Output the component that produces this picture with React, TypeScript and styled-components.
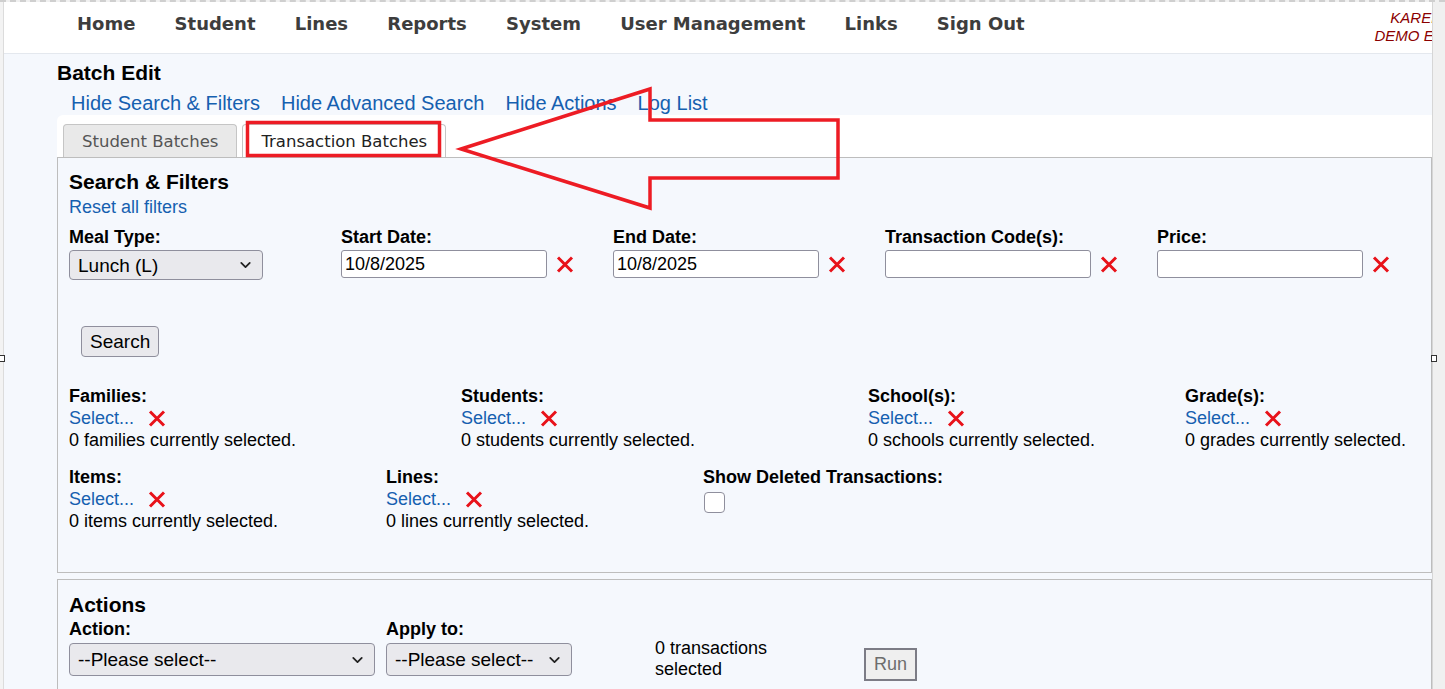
import React from "react";
import styled, { createGlobalStyle } from "styled-components";
import { ChevronDown } from "lucide-react";

const GlobalStyle = createGlobalStyle`
  html, body {
    margin: 0;
    padding: 0;
    background: #f0f0f0;
    overflow: hidden;
  }
  body {
    font-family: "Liberation Sans", Arial, sans-serif;
    color: #000;
  }
`;

const Frame = styled.div`
  display: flex;
  height: 689px;
  border-top: 2px dashed #cfcfcf;
  box-sizing: border-box;
  position: relative;
`;

const LeftEdge = styled.div`
  width: 3px;
  background: #f3f3f3;
  border-right: 1px solid #dcdcdc;
`;

const RightEdge = styled.div`
  width: 12px;
  background: #f0f0f0;
  border-left: 1px solid #d6d6d6;
`;

const Handle = styled.div<{ $left: number }>`
  position: absolute;
  left: ${(p) => p.$left}px;
  top: 353px;
  width: 4px;
  height: 5px;
  border: 1px solid #333;
  background: #fff;
`;

const Viewport = styled.div`
  width: 1428px;
  height: 687px;
  overflow: hidden;
  background: #f5f8fd;
  position: relative;
`;

const NavBar = styled.div`
  height: 51px;
  background: #fff;
  border-bottom: 1px solid #e4e8ee;
  display: flex;
  align-items: center;
  padding-left: 53px;
`;

const NavItem = styled.a`
  padding: 0 19.6px;
  font-family: "DejaVu Sans", Verdana, sans-serif;
  font-weight: bold;
  font-size: 18px;
  color: #3d3d3d;
  text-decoration: none;
  white-space: nowrap;
  position: relative;
  top: -4px;
  &:first-child {
    padding-left: 20px;
  }
`;

const UserBlock = styled.div`
  margin-left: auto;
  margin-right: -10px;
  text-align: right;
  font-style: italic;
  font-size: 15px;
  line-height: 18px;
  color: #8b0000;
  white-space: nowrap;
  position: relative;
  top: -1px;
`;

const Content = styled.div`
  padding-left: 53px;
`;

const PageTitle = styled.div`
  font-weight: bold;
  font-size: 21px;
  line-height: 24px;
  margin-top: 7px;
`;

const LinkRow = styled.div`
  display: flex;
  gap: 21px;
  padding-left: 14px;
  margin-top: 7px;
  line-height: 23px;
`;

const TopLink = styled.a`
  color: #1560b0;
  font-size: 20px;
  text-decoration: none;
  white-space: nowrap;
`;

const TabBand = styled.div`
  background: #fff;
  border-top-left-radius: 6px;
  padding: 9px 0 0 6px;
  display: flex;
  gap: 5px;
  height: 33px;
`;

const Tab = styled.div<{ $active?: boolean }>`
  height: 32px;
  padding: 0 18px;
  display: flex;
  align-items: center;
  font-family: "DejaVu Sans", Verdana, sans-serif;
  font-size: 16.5px;
  color: ${(p) => (p.$active ? "#222" : "#555")};
  background: ${(p) => (p.$active ? "#fff" : "#e9e9e9")};
  border: 1px solid #c5c5c5;
  border-bottom: none;
  border-radius: 4px 4px 0 0;
  white-space: nowrap;
`;

const Panel = styled.div<{ $height?: number }>`
  border: 1px solid #bdbdbd;
  background: #f5f8fd;
  padding: 12px 11px 0 11px;
  box-sizing: border-box;
  height: ${(p) => (p.$height ? `${p.$height}px` : "auto")};
`;

const PanelTitle = styled.div`
  font-weight: bold;
  font-size: 21px;
  line-height: 24px;
`;

const SmallLink = styled.a`
  color: #1560b0;
  font-size: 18px;
  line-height: 22px;
  text-decoration: none;
`;

const ResetLink = styled(SmallLink)`
  display: block;
  margin-top: 2px;
`;

const FieldGrid = styled.div<{ $cols: string }>`
  display: grid;
  grid-template-columns: ${(p) => p.$cols};
`;

const Label = styled.div`
  font-weight: bold;
  font-size: 18px;
  line-height: 22px;
  white-space: nowrap;
`;

const InputRow = styled.div`
  display: flex;
  align-items: center;
  gap: 9px;
  margin-top: 2px;
`;

const TextInput = styled.input`
  width: 206px;
  height: 28px;
  box-sizing: border-box;
  border: 1px solid #8f8f9d;
  border-radius: 3px;
  background: #fff;
  font-family: "Liberation Sans", Arial, sans-serif;
  font-size: 18px;
  padding: 0 3px;
  color: #000;
`;

const SelectWrap = styled.div<{ $width: number; $height: number }>`
  position: relative;
  width: ${(p) => p.$width}px;
  height: ${(p) => p.$height}px;
`;

const Select = styled.select`
  appearance: none;
  width: 100%;
  height: 100%;
  box-sizing: border-box;
  border: 1px solid #8f8f9d;
  border-radius: 4px;
  background: #e9e9ed;
  font-family: "Liberation Sans", Arial, sans-serif;
  font-size: 19px;
  color: #000;
  padding: 0 8px;
`;

const Chevron = styled(ChevronDown)`
  position: absolute;
  right: 9px;
  top: 50%;
  transform: translateY(-50%);
  pointer-events: none;
`;

const SearchButton = styled.button`
  height: 31px;
  padding: 0 8px;
  margin: 46px 0 0 12px;
  background: #e9e9ed;
  border: 1px solid #8f8f9d;
  border-radius: 4px;
  font-family: "Liberation Sans", Arial, sans-serif;
  font-size: 19px;
  color: #000;
`;

const RunButton = styled.button`
  width: 53px;
  height: 33px;
  margin-bottom: -5px;
  background: #efefef;
  border: 2px solid #7c7c86;
  font-family: "Liberation Sans", Arial, sans-serif;
  font-size: 18px;
  color: #6d6d6d;
  padding: 0;
`;

const Cell = styled.div`
  font-size: 18px;
  line-height: 22px;
`;

const SelectLine = styled.div`
  display: flex;
  align-items: center;
  gap: 14px;
`;

const Checkbox = styled.div`
  width: 19px;
  height: 19px;
  margin: 4px 0 0 1px;
  border: 1px solid #8f8f9d;
  border-radius: 4px;
  background: #fff;
`;

const ActionsPanel = styled(Panel)`
  margin-top: 6px;
  padding-top: 13px;
  padding-bottom: 20px;
`;

const ActionsRow = styled.div`
  display: grid;
  grid-template-columns: 317px 269px 209px auto;
  align-items: end;
  margin-top: 1px;
`;

const ActionSelect = styled(SelectWrap)`
  margin-top: 3px;
`;

const CountText = styled.div`
  font-size: 18px;
  line-height: 21px;
  width: 130px;
  margin-bottom: -4px;
`;

const Overlay = styled.svg`
  position: absolute;
  left: 0;
  top: 0;
  pointer-events: none;
`;

const RedX = () => (
  <svg width="18" height="17" viewBox="0 0 18 17">
    <path d="M2 1.5 L16 15.5 M16 1.5 L2 15.5" stroke="#e8121a" strokeWidth="3" />
  </svg>
);

const navItems = ["Home", "Student", "Lines", "Reports", "System", "User Management", "Links", "Sign Out"];

const filterFields = [
  { label: "Meal Type:", kind: "select", value: "Lunch (L)" },
  { label: "Start Date:", kind: "text", value: "10/8/2025" },
  { label: "End Date:", kind: "text", value: "10/8/2025" },
  { label: "Transaction Code(s):", kind: "text", value: "" },
  { label: "Price:", kind: "text", value: "" },
];

const pickers1 = [
  { label: "Families:", count: "0 families currently selected." },
  { label: "Students:", count: "0 students currently selected." },
  { label: "School(s):", count: "0 schools currently selected." },
  { label: "Grade(s):", count: "0 grades currently selected." },
];

const pickers2 = [
  { label: "Items:", count: "0 items currently selected." },
  { label: "Lines:", count: "0 lines currently selected." },
];

// page coords are shifted by the 4px left edge and 2px top border
const ox = 4;
const oy = 2;
const arrow = [
  [461, 149], [650, 89], [650, 120], [838, 120], [838, 178], [650, 178], [650, 208],
]
  .map(([x, y]) => `${x - ox},${y - oy}`)
  .join(" ");

const Picker = ({ label, count }: { label: string; count: string }) => (
  <Cell>
    <Label>{label}</Label>
    <SelectLine>
      <SmallLink>Select...</SmallLink>
      <RedX />
    </SelectLine>
    <div>{count}</div>
  </Cell>
);

const DropDown = ({ value }: { value: string }) => (
  <>
    <Select defaultValue={value}>
      <option>{value}</option>
    </Select>
    <Chevron size={17} strokeWidth={2.5} color="#222" />
  </>
);

export default function App() {
  return (
    <>
      <GlobalStyle />
      <Frame>
        <LeftEdge />
        <Viewport>
          <NavBar>
            {navItems.map((n) => (
              <NavItem key={n}>{n}</NavItem>
            ))}
            <UserBlock>
              KAREN
              <br />
              DEMO EL
            </UserBlock>
          </NavBar>
          <Content>
            <PageTitle>Batch Edit</PageTitle>
            <LinkRow>
              <TopLink>Hide Search &amp; Filters</TopLink>
              <TopLink>Hide Advanced Search</TopLink>
              <TopLink>Hide Actions</TopLink>
              <TopLink>Log List</TopLink>
            </LinkRow>
            <TabBand>
              <Tab>Student Batches</Tab>
              <Tab $active>Transaction Batches</Tab>
            </TabBand>
            <Panel $height={416}>
              <PanelTitle>Search &amp; Filters</PanelTitle>
              <ResetLink>Reset all filters</ResetLink>
              <FieldGrid $cols="272px 272px 272px 272px auto" style={{ marginTop: 8 }}>
                {filterFields.map((f) => (
                  <div key={f.label}>
                    <Label>{f.label}</Label>
                    <InputRow>
                      {f.kind === "select" ? (
                        <SelectWrap $width={194} $height={30}>
                          <DropDown value={f.value} />
                        </SelectWrap>
                      ) : (
                        <>
                          <TextInput defaultValue={f.value} />
                          <RedX />
                        </>
                      )}
                    </InputRow>
                  </div>
                ))}
              </FieldGrid>
              <SearchButton>Search</SearchButton>
              <FieldGrid $cols="392px 407px 317px auto" style={{ marginTop: 28 }}>
                {pickers1.map((p) => (
                  <Picker key={p.label} {...p} />
                ))}
              </FieldGrid>
              <FieldGrid $cols="317px 317px auto" style={{ marginTop: 15 }}>
                {pickers2.map((p) => (
                  <Picker key={p.label} {...p} />
                ))}
                <Cell>
                  <Label>Show Deleted Transactions:</Label>
                  <Checkbox />
                </Cell>
              </FieldGrid>
            </Panel>
            <ActionsPanel>
              <PanelTitle>Actions</PanelTitle>
              <ActionsRow>
                <div>
                  <Label>Action:</Label>
                  <ActionSelect $width={306} $height={33}>
                    <DropDown value="--Please select--" />
                  </ActionSelect>
                </div>
                <div>
                  <Label>Apply to:</Label>
                  <ActionSelect $width={186} $height={33}>
                    <DropDown value="--Please select--" />
                  </ActionSelect>
                </div>
                <CountText>0 transactions selected</CountText>
                <div>
                  <RunButton disabled>Run</RunButton>
                </div>
              </ActionsRow>
            </ActionsPanel>
          </Content>
          <Overlay width="1428" height="687">
            <rect
              x={247.5 - ox}
              y={122.5 - oy}
              width={192}
              height={33}
              fill="none"
              stroke="#ed1c24"
              strokeWidth={3.5}
            />
            <polygon points={arrow} fill="none" stroke="#ed1c24" strokeWidth={3.5} />
          </Overlay>
        </Viewport>
        <RightEdge />
        <Handle $left={-1} />
        <Handle $left={1431} />
      </Frame>
    </>
  );
}
